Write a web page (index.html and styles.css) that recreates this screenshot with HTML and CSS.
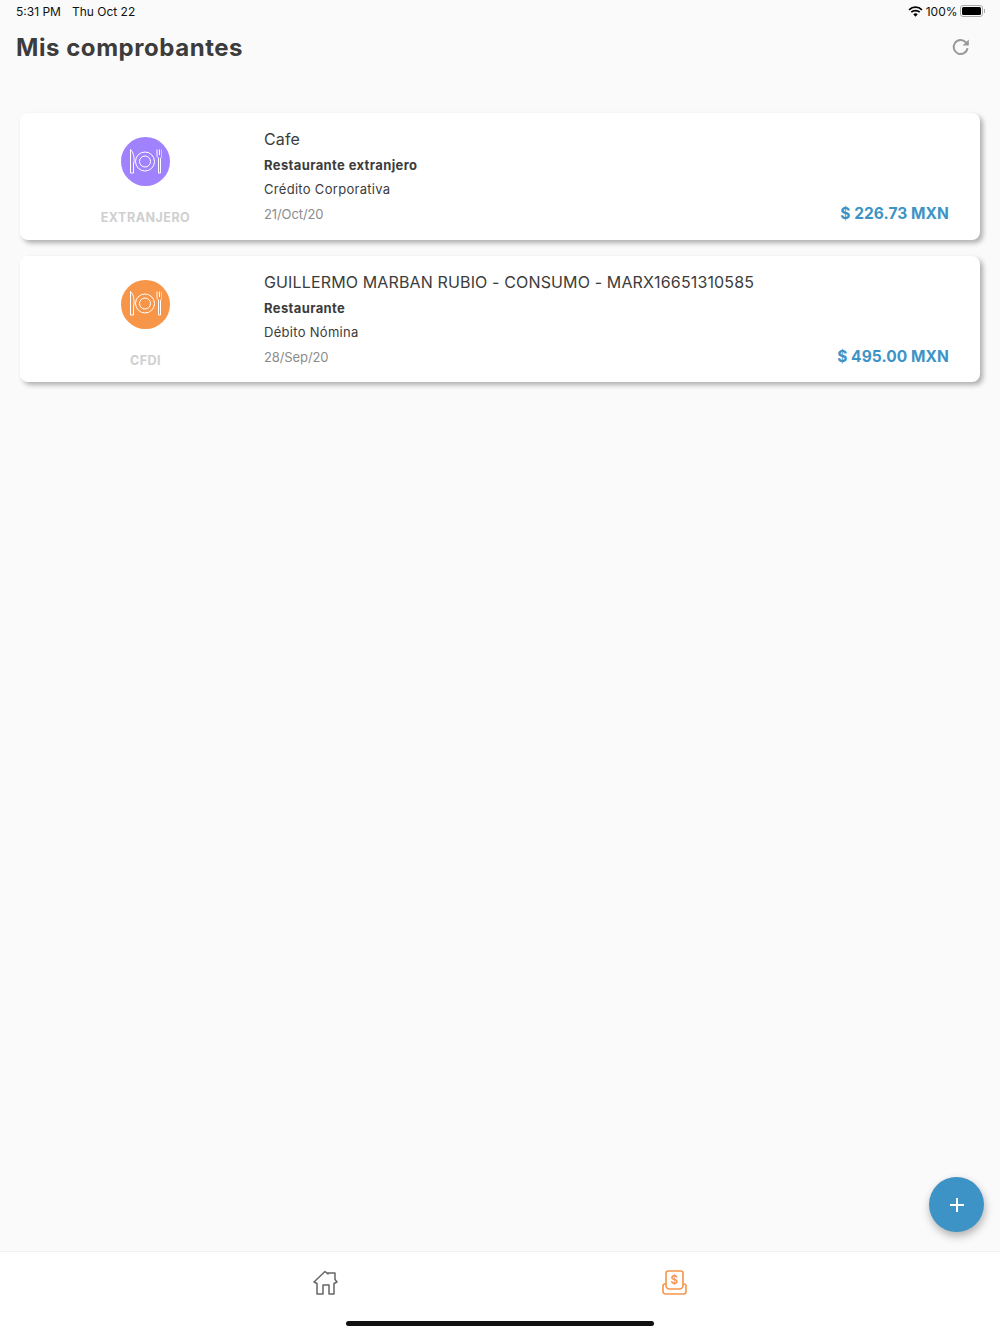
FILE: index.html
```html
<!DOCTYPE html>
<html lang="es">
<head>
    <meta charset="UTF-8">
    <meta name="viewport" content="width=device-width, initial-scale=1.0">
    <title>Mis comprobantes</title>
    <link rel="stylesheet" href="styles.css">
</head>
<body>
    <div class="app">
        <div class="status-bar">
            <div class="status-time"><span>5:31 PM</span><span>Thu Oct 22</span></div>
            <div class="status-right">
                <svg class="wifi" viewBox="0 0 16 12" width="15" height="11">
                    <path d="M1 4.2a10 10 0 0 1 14 0M3.4 6.8a6.6 6.6 0 0 1 9.2 0" fill="none" stroke="#000" stroke-width="1.9"/>
                    <path d="M5.6 9a3.4 3.4 0 0 1 4.8 0L8 11.6z" fill="#000"/>
                </svg>
                <span>100%</span>
                <div class="battery"><div class="battery-fill"></div></div>
                <div class="battery-tip"></div>
            </div>
        </div>

        <div class="header">
            <h1>Mis comprobantes</h1>
            <svg class="refresh" viewBox="0 0 20 20" width="20" height="20">
                <path d="M16.6 11.2a7 7 0 1 1-1.7-5.8L17 7.6" fill="none" stroke="#999" stroke-width="2"/>
                <path d="M17.8 2.4v6.2h-6.2z" fill="#999"/>
            </svg>
        </div>

        <div class="list">
            <div class="card">
                <div class="card-type">
                    <div class="type-icon purple">
                        <svg viewBox="0 0 34 28" width="34" height="28">
                            <g fill="none" stroke="#fff" stroke-width="1">
                                <path d="M2.500 1.500c2.500 2 4 7 3.500 13.500H5.500v10H2.500z"/>
                                <circle cx="17" cy="13.500" r="9.500"/>
                                <circle cx="17" cy="13.500" r="5.500"/>
                                <path d="M29 1.500v6c0 1.500 1 2 1.500 2.500v15h2V10c.5-.5 1.500-1 1.500-2.500v-6M31.500 1.500v5.500"/>
                            </g>
                        </svg>
                    </div>
                    <div class="type-label">EXTRANJERO</div>
                </div>
                <div class="card-info">
                    <div class="card-title">Cafe</div>
                    <div class="card-category">Restaurante extranjero</div>
                    <div class="card-payment">Crédito Corporativa</div>
                    <div class="card-bottom">
                        <span class="card-date">21/Oct/20</span>
                        <span class="card-amount">$ 226.73 MXN</span>
                    </div>
                </div>
            </div>

            <div class="card">
                <div class="card-type">
                    <div class="type-icon orange">
                        <svg viewBox="0 0 34 28" width="34" height="28">
                            <g fill="none" stroke="#fff" stroke-width="1">
                                <path d="M2.500 1.500c2.500 2 4 7 3.500 13.500H5.500v10H2.500z"/>
                                <circle cx="17" cy="13.500" r="9.500"/>
                                <circle cx="17" cy="13.500" r="5.500"/>
                                <path d="M29 1.500v6c0 1.500 1 2 1.500 2.500v15h2V10c.5-.5 1.500-1 1.500-2.500v-6M31.500 1.500v5.500"/>
                            </g>
                        </svg>
                    </div>
                    <div class="type-label">CFDI</div>
                </div>
                <div class="card-info">
                    <div class="card-title">GUILLERMO MARBAN RUBIO - CONSUMO - MARX16651310585</div>
                    <div class="card-category">Restaurante</div>
                    <div class="card-payment">Débito Nómina</div>
                    <div class="card-bottom">
                        <span class="card-date">28/Sep/20</span>
                        <span class="card-amount">$ 495.00 MXN</span>
                    </div>
                </div>
            </div>
        </div>

        <div class="tabbar">
            <div class="tab">
                <svg viewBox="0 0 26 26" width="26" height="26">
                    <path d="M2 13L13 2.500l3 2.500V4h7v6.500l2 2.500-3 1.500V25h-5V16h-6v9H5V14.500z" fill="none" stroke="#666" stroke-width="1.500" stroke-linejoin="round"/>
                </svg>
            </div>
            <div class="tab">
                <svg viewBox="0 0 26 26" width="26" height="26">
                    <g fill="none" stroke="#f79548" stroke-width="1.600" stroke-linejoin="round">
                        <path d="M4 15.500V4a2 2 0 0 1 2-2h13a2 2 0 0 1 2 2v11.500"/>
                        <path d="M4 15H3a2 2 0 0 0-2 2v5.500A2.500 2.500 0 0 0 3.500 25h18a2.500 2.500 0 0 0 2.500-2.500V17a2 2 0 0 0-2-2h-1v1.500a3.500 3.500 0 0 1-3.500 3.500h-10A3.500 3.500 0 0 1 4 16.500z"/>
                    </g>
                    <text class="tab-dollar" x="12.500" y="14.500">$</text>
                </svg>
            </div>
        </div>

        <div class="home-indicator"></div>
        <div class="fab">
            <svg viewBox="0 0 16 16" width="16" height="16">
                <path d="M8 1v14M1 8h14" stroke="#fff" stroke-width="2"/>
            </svg>
        </div>
    </div>
</body>
</html>
```

FILE: styles.css
```css
* {
    box-sizing: border-box;
}
body {
    margin: 0;
    font-family: "Inter", "Liberation Sans", sans-serif;
    background-color: #fafafa;
    color: #3c3c3c;
}
.app {
    position: relative;
    display: flex;
    flex-direction: column;
    width: 1000px;
    height: 1334px;
    overflow: hidden;
}

/* Status bar */
.status-bar {
    display: flex;
    justify-content: space-between;
    align-items: center;
    height: 24px;
    padding: 0 15px 2px 16px;
    font-size: 12px;
    color: #111;
}
.status-time {
    display: flex;
    gap: 11px;
}
.status-right {
    display: flex;
    align-items: center;
    gap: 3px;
}
.battery {
    width: 23px;
    height: 12px;
    margin-left: -1px;
    padding: 1px;
    border: 1px solid #aaa;
    border-radius: 3px;
}
.battery-fill {
    height: 100%;
    background-color: #000;
    border-radius: 1.500px;
}
.battery-tip {
    width: 1.500px;
    height: 4px;
    margin-left: -2px;
    background-color: #aaa;
}

/* Header */
.header {
    display: flex;
    justify-content: space-between;
    align-items: center;
    height: 46px;
    padding: 0 29px 0 16px;
}
h1 {
    margin: 0;
    font-size: 24px;
    font-weight: 700;
    letter-spacing: 0.550px;
    color: #3c3c3c;
}

/* Cards */
.list {
    flex: 1;
    display: flex;
    flex-direction: column;
    gap: 16px;
    padding: 43px 20px 0;
}
.card {
    display: flex;
    height: 126.600px;
    padding: 0 31px 0 15px;
    background-color: white;
    border-radius: 8px;
    box-shadow: 3px 3px 5px rgba(0,0,0,0.3);
}
.card-type {
    display: flex;
    flex-direction: column;
    align-items: center;
    width: 220px;
    margin-right: 9px;
    padding-top: 24px;
}
.type-icon {
    display: flex;
    justify-content: center;
    align-items: center;
    width: 49px;
    height: 49px;
    border-radius: 50%;
}
.purple {
    background-color: #a082ff;
}
.orange {
    background-color: #f79548;
}
.type-label {
    margin-top: 24px;
    margin-left: 1px;
    font-size: 12.500px;
    line-height: 16px;
    font-weight: 700;
    letter-spacing: 0.500px;
    color: #cfcfcf;
}
.card-info {
    flex: 1;
    display: flex;
    flex-direction: column;
    padding-top: 16px;
}
.card-title {
    font-size: 16px;
    line-height: 20px;
    letter-spacing: 0.140px;
    color: #3c3c3c;
}
.card-category {
    margin-top: 7px;
    font-size: 13px;
    line-height: 18px;
    font-weight: 700;
    letter-spacing: 0.380px;
}
.card-payment {
    margin-top: 6px;
    font-size: 13px;
    line-height: 18px;
    letter-spacing: 0.300px;
}
.card-bottom {
    display: flex;
    justify-content: space-between;
    align-items: center;
    margin-top: 6px;
}
.card-date {
    font-size: 13px;
    line-height: 20px;
    letter-spacing: -0.100px;
    color: #8c8c8c;
}
.card-amount {
    font-size: 15.500px;
    line-height: 20px;
    font-weight: 700;
    letter-spacing: 0.080px;
    color: #3d93c5;
}

/* Tab bar */
.tabbar {
    display: flex;
    height: 83px;
    padding: 17px 150px 0;
    background-color: white;
    border-top: 1px solid #f0f0f0;
}
.tab {
    flex: 1;
    display: flex;
    justify-content: center;
    height: 26px;
}
.tab-dollar {
    font-family: "Inter", sans-serif;
    font-size: 12px;
    font-weight: 600;
    text-anchor: middle;
    fill: #f79548;
}
.home-indicator {
    position: absolute;
    left: 346px;
    bottom: 8px;
    width: 308px;
    height: 5px;
    background-color: #111;
    border-radius: 3px;
}
.fab {
    position: absolute;
    left: 929px;
    top: 1177px;
    display: flex;
    justify-content: center;
    align-items: center;
    width: 55px;
    height: 55px;
    background-color: #3d93c5;
    border-radius: 50%;
    box-shadow: 1px 4px 8px rgba(0,0,0,0.3);
}
```
